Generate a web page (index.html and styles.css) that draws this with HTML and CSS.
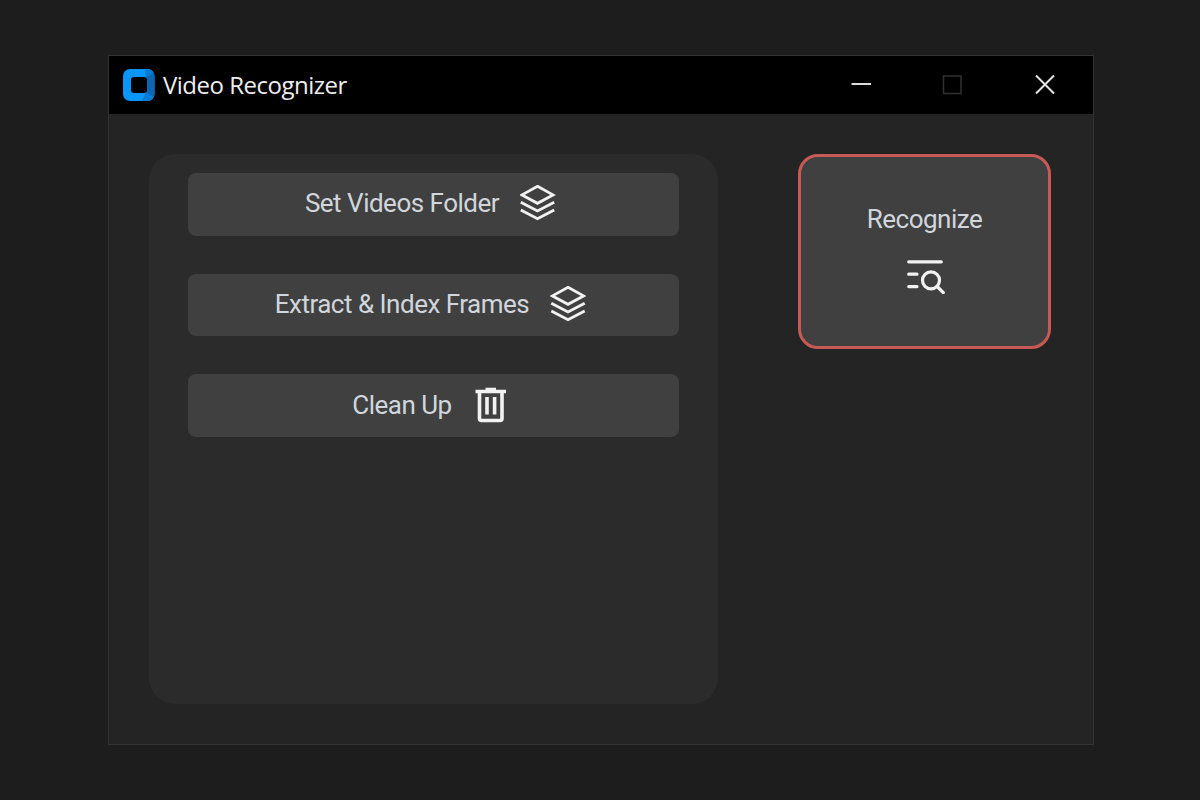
FILE: index.html
```html
<!DOCTYPE html>
<html lang="en">
<head>
<meta charset="utf-8">
<title>Video Recognizer</title>
<link rel="stylesheet" href="styles.css">
</head>
<body>
	<div class="window">
		<div class="titlebar">
			<svg class="logo" width="32" height="32" viewBox="0 0 32 32">
				<rect x="0" y="0" width="31.5" height="32" rx="7" fill="#0a96f8"/>
				<path d="M31.5 7V25A7 7 0 0 1 25 32L23 23V9L25 0A7 7 0 0 1 31.5 7Z" fill="#0b66b4"/>
				<path d="M23 23L30.5 28A7 7 0 0 1 25 32L19 32Z" fill="#087bd2"/>
				<path d="M23 9L30.5 4A7 7 0 0 0 25 0H22Z" fill="#087bd2"/>
				<rect x="8" y="8" width="16" height="16" rx="3" fill="#000"/>
			</svg>
			<span class="title">Video Recognizer</span>
			<div class="controls">
				<svg class="control" width="92" height="58" viewBox="0 0 92 58">
					<path d="M34.5 28H54" stroke="#ddd" stroke-width="2"/>
				</svg>
				<svg class="control" width="92" height="58" viewBox="0 0 92 58">
					<rect x="34.5" y="20" width="17.5" height="17.5" fill="none" stroke="#303030" stroke-width="1.5"/>
				</svg>
				<svg class="control" width="92" height="58" viewBox="0 0 92 58">
					<path d="M35 19.5L53 37.5M53 19.5L35 37.5" stroke="#e4e4e4" stroke-width="2"/>
				</svg>
			</div>
		</div>

		<div class="content">
			<div class="panel">
				<button class="btn">
					<span>Set Videos Folder</span>
					<svg width="36" height="36" viewBox="0 0 36 36" class="icon">
						<path d="M17.5 1.3L33 9.9L17.5 18.3L2 9.9Z"/>
						<path d="M.8 17.2L17.5 26L34.2 17.2M.8 25L17.5 33.7L34.2 25"/>
					</svg>
				</button>
				<button class="btn">
					<span>Extract &amp; Index Frames</span>
					<svg width="36" height="36" viewBox="0 0 36 36" class="icon">
						<path d="M18 1.3L33.5 9.9L18 18.3L2.5 9.9Z"/>
						<path d="M1.3 17.2L18 26L34.7 17.2M1.3 25L18 33.7L34.7 25"/>
					</svg>
				</button>
				<button class="btn clean">
					<span>Clean Up</span>
					<svg width="36" height="36" viewBox="0 0 36 36" class="icon trash">
						<path d="M2.5 4.5H33M12.5 2.5H23" />
						<path d="M6.5 4.5V31.5Q6.5 33.5 8.5 33.5H27Q29 33.5 29 31.5V4.5"/>
						<path d="M14 10V27.5M21.6 10V27.5"/>
					</svg>
				</button>
			</div>

			<button class="recognize">
				<span>Recognize</span>
				<svg width="40" height="36" viewBox="0 0 40 36" class="icon search">
					<path d="M3.7 3.8H36.3M3.7 16.2H12M3.7 28.6H12"/>
					<circle cx="26" cy="22.3" r="8.5"/>
					<path d="M32.2 28.5L38.3 34.6"/>
				</svg>
			</button>
		</div>
	</div>
</body>
</html>
```
FILE: styles.css
```css
* {
    box-sizing: border-box;
}

body {
    margin: 0;
    height: 800px;
    padding: 55px 106px 0 108px;
    background-color: #1d1d1d;
}

.window {
    width: 986px;
    height: 690px;
    border: 1px solid #333;
    background-color: #242424;
}

.titlebar {
    display: flex;
    align-items: center;
    height: 58px;
    padding-left: 14px;
    background-color: #000;
}

.logo {
    margin-right: 8px;
    margin-bottom: 1px;
}

.title {
    font: 24px/30px "Open Sans", "Noto Sans", sans-serif;
    color: #eee;
    letter-spacing: -0.5px;
}

.controls {
    display: flex;
    margin-left: auto;
}

.content {
    display: flex;
    align-items: flex-start;
    padding: 40px 42px 0 40px;
    justify-content: space-between;
}

.panel {
    display: flex;
    flex-direction: column;
    gap: 38px;
    width: 569px;
    height: 550px;
    padding: 19px 39px 0 39px;
    border-radius: 26px;
    background-color: #2b2b2b;
}

button {
    display: flex;
    align-items: center;
    justify-content: center;
    padding: 0;
    border: none;
    background-color: #404040;
    color: #d0d6dc;
    font: 26px/30px Roboto, sans-serif;
    letter-spacing: -0.5px;
    white-space: nowrap;
}

.btn {
    height: 62.7px;
    gap: 21px;
    padding: 0 6px 3px 0;
    border-radius: 8px;
}

.clean {
    padding-bottom: 2px;
}

.recognize {
    flex-direction: column;
    gap: 24px;
    width: 253px;
    height: 195px;
    padding-bottom: 6px;
    border: 3px solid #c85a56;
    border-radius: 20px;
}

.icon {
    fill: none;
    stroke: #f2f2f2;
    stroke-width: 2.8;
}

.trash {
    stroke-width: 3.6;
}

.search {
    stroke-width: 3.2;
    stroke-linecap: round;
}
```
